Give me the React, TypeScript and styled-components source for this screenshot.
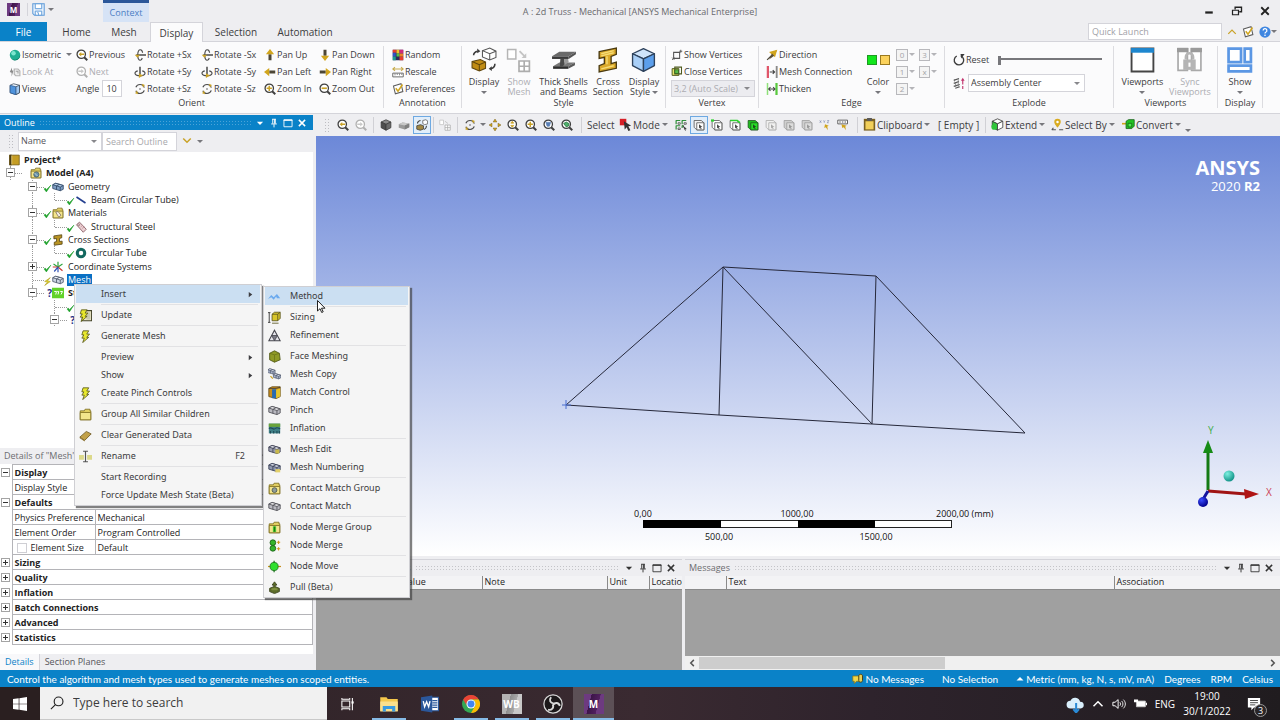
import React, { ReactNode } from 'react';
import styled, { createGlobalStyle, css } from 'styled-components';

const font = {
  ui: '"Open Sans", "Noto Sans", sans-serif',
  menu: '"Noto Sans", "Open Sans", sans-serif',
  status: '"Lato", "Open Sans", sans-serif',
};
const c = {
  blue: '#0a82c8',
  chrome: '#eeeef1',
  ribbon: '#fbfbfc',
  line: '#d4d4da',
  text: '#3c3c40',
  muted: '#adadb2',
};

const Global = createGlobalStyle`
  *, *::before, *::after { box-sizing: border-box; }
  body { margin: 0; background: ${c.chrome}; }
  button, input, select { font: inherit; color: inherit; margin: 0; padding: 0; border: 0; background: none; border-radius: 0; }
  button { display: flex; align-items: center; white-space: nowrap; }
`;

/* ---------- icons ---------- */

const lens = (stroke: string, mark: ReactNode) => (
  <>
    <path d="M10.6 10.6 15 15" stroke={stroke} strokeWidth="2.6" />
    <circle cx="7" cy="7" r="5.6" fill="#fff" stroke={stroke} strokeWidth="1.7" />
    {mark}
  </>
);
const cube = (top: string, left: string, right: string, line = '#3a3a3a') => (
  <g stroke={line} strokeWidth="1" strokeLinejoin="round">
    <path d="M8 1 14.5 4 8 7.2 1.5 4Z" fill={top} />
    <path d="M1.5 4 8 7.2V15L1.5 11.6Z" fill={left} />
    <path d="M14.5 4 8 7.2V15l6.5-3.4Z" fill={right} />
  </g>
);
const brick = (top: string, side: string, line: string) => (
  <g fill={side} stroke={line} strokeWidth="1.1" strokeLinejoin="round">
    <path d="M1 5 5 3l10 3v5l-4 2L1 10Z" />
    <path d="M1 5 5 3l10 3-4 2Z" fill={top} />
    <path d="M11 8v5M6 6.500 6 11.500M6 6.500l4-2" fill="none" />
  </g>
);
const folder = (mark: ReactNode) => (
  <>
    <path d="M1.500 3.500h5l1-2h6v2h1v11h-13z" fill="#e2cf62" stroke="#7a6a1c" />
    <path d="M1.500 5.500h13v9h-13z" fill="#f3e58c" stroke="#7a6a1c" />
    {mark}
  </>
);
const bolt = <path d="M5 1h7L9.500 5H13L9.500 9H12L4.500 15.500 6.500 10H3.500L6 6H3.500Z" fill="#e8e82c" stroke="#55551a" strokeWidth="1" />;
const faceBox = (fill: string, top: string, line: string) => (
  <>
    <path d="M1.500 2h9.500l3.500 3v9.500H5L1.500 11Z" fill={top} stroke={line} />
    <path d="M5 5h9.500v9.500H5Z" fill={fill} stroke={line} />
    <path d="m8 7 4.500 3.500-2 .3 1 2.200-1.200.5-.9-2.200L8 12.500Z" fill={line} />
  </>
);

const glyphs: Record<string, ReactNode> = {
  sphere: <><circle cx="8" cy="8" r="7" fill="#1fae92" /><circle cx="6" cy="5.500" r="3" fill="#7ce6cf" /><path d="M3 13a7 7 0 0 0 12-5 8 8 0 0 1-12 5" fill="#0c7663" /></>,
  lookAt: <><path d="M1 8 4 2v4h2L3.500 14V9Z" fill="#8a8a8a" /><path d="M7 4h5l2.500 2.500V13H9L7 11Z" fill="#eee" stroke="#b4b4b4" strokeWidth="1.600" /><path d="M9 7h3v3" fill="none" stroke="#a4a4a4" strokeWidth="1.400" /></>,
  views: <><path d="M1.500 3 6 1l8 2v10l-5 2.500L1.500 13Z" fill="#eaf3fd" stroke="#3a4654" /><path d="M9 5v10.500l5-2.500V3Z" fill="#9fc6f0" stroke="#3a4654" /><path d="M1.500 3 9 5v10.500L1.500 13Z" fill="#4f93dc" stroke="#2c5a90" /></>,
  magPrev: lens('#3f3f3f', <path d="M3.500 7 7 4v2h4v2H7v2Z" fill="#c9a227" />),
  magNext: lens('#b0b0b0', <path d="M10.500 7 7 4v2H3v2h4v2Z" fill="#c8c8c8" />),
  zoomIn: lens('#3f3f3f', <path d="M7 3.500v7M3.500 7h7" stroke="#c9a227" strokeWidth="2" />),
  zoomOut: lens('#3f3f3f', <path d="M3.500 7h7" stroke="#c9a227" strokeWidth="2.200" />),
  zoomBox: lens('#3f3f3f', <path d="M7 3 9 5.500H5ZM7 11l2-2.500H5Z" fill="#c9a227" stroke="#c9a227" />),
  zoomFit: lens('#3f3f3f', <path d="M4 4.500h6L8.500 9.500h-3Z" fill="#5a7fb5" stroke="#5a7fb5" />),
  zoomSel: lens('#3f3f3f', <path d="m3.500 6 3.500-2 3.500 2v3L7 10.500Z" fill="#4fae6b" stroke="#25743c" />),
  rotX: <><path d="M3 8h13" stroke="#4a4a4a" strokeWidth="2" /><path d="M11.500 5C11 2 9.500 1 8.500 1 6 1 5 5 5 8s1 7 3.500 7c1 0 2-1 2.500-3" fill="none" stroke="#4a4a4a" strokeWidth="1.500" /><path d="M1 7.500h7l-3.500 4Z" fill="#c9a227" /></>,
  rotY: <><path d="M8 1v10" stroke="#4a4a4a" strokeWidth="2" /><path d="M5 6.500C-1 8 .5 13 8 13s9-5 3-6.500" fill="none" stroke="#4a4a4a" strokeWidth="1.500" /><path d="M6.500 16 12 12.500 6.500 9.500Z" fill="#c9a227" /></>,
  rotZ: <><circle cx="8" cy="8" r="6" fill="none" stroke="#4a4a4a" strokeWidth="1.500" strokeDasharray="14 4.850" strokeDashoffset="-2" /><circle cx="8" cy="8" r="1" fill="#4a4a4a" /><path d="m10.500 1 4 1.500-2.500 3.500ZM5.500 15l-4-1.500L4 10Z" fill="#c9a227" /></>,
  up: <><path d="M6 7h4v8H6z" fill="#4c4636" /><path d="M8 0 13.500 7h-11Z" fill="#d1a51d" /></>,
  down: <><path d="M6 1h4v8H6z" fill="#4c4636" /><path d="M8 16 13.500 9h-11Z" fill="#d1a51d" /></>,
  left: <><path d="M7 6h8v4H7z" fill="#4c4636" /><path d="M0 8 7 2.500v11Z" fill="#d1a51d" /></>,
  right: <><path d="M1 6h8v4H1z" fill="#4c4636" /><path d="M16 8 9 2.500v11Z" fill="#d1a51d" /></>,
  random: <><path d="M1 1h14v14H1z" fill="#2d2d60" /><path d="M1 1h5v4H1zM10 10h5v5h-5z" fill="#e63c2e" /><path d="M6 1h4v5H6z" fill="#f0c52b" /><path d="M10 1h5v5h-5z" fill="#d02a7a" /><path d="M1 5h4v5H1z" fill="#3252c5" /><path d="M6 6h4v4H6z" fill="#54c04a" /><path d="M1 10h4v5H1z" fill="#1f9c8d" /><path d="M10 6h5v4h-5z" fill="#ec8126" /></>,
  rescale: <><path d="M1 9.500h14v5H1z" fill="#fff" stroke="#6a6a6a" strokeWidth="1.300" /><path d="M4 10v2.500M7 10v2M10 10v2.500M13 10v2" stroke="#6a6a6a" /><path d="M1 4h14M4 1.500 1 4l3 2.500M12 1.500 15 4l-3 2.500" fill="none" stroke="#c7ab4c" strokeWidth="1.400" /></>,
  prefs: <><path d="m2 4 10-3 2.500 10.500-10 3Z" fill="#fff" stroke="#5c5c5c" strokeWidth="1.400" /><path d="m5 7 3 4 6-9" fill="none" stroke="#d1a51d" strokeWidth="2" /></>,
  vertex: <><path d="M3.500 4.500h8v8h-8z" fill="none" stroke="#555" strokeWidth="1.400" /><path d="M13 1v4M11 3h4M1.500 11.500l3 3M4.500 11.500l-3 3" stroke="#555" strokeWidth="1.200" /></>,
  closeVertex: <><path d="M1.500 3.500h9v9h-9z" fill="#e7e26d" stroke="#4f5a1e" strokeWidth="1.300" /><path d="M5 1.500h9v9H5z" fill="none" stroke="#4f5a1e" strokeWidth="1.400" /><path d="M5 5h5v5H5z" fill="#58b947" stroke="#2f5a1e" /></>,
  direction: <><path d="M1.500 14.500 13.500 2.500" stroke="#4c4636" strokeWidth="1.600" /><path d="m4 4 11-3-3 10Z" fill="#d1a51d" /><path d="m4 14 4-8 3 3Z" fill="#5c513a" /></>,
  meshConn: <><path d="M1 0h3v16H1z" fill="#e0566a" /><path d="M13 0h2.500v16H13z" fill="#8a8a8a" /><path d="M5 8h6M9 5.500 11.500 8 9 10.500" fill="none" stroke="#444" strokeWidth="1.500" /></>,
  thicken: <><path d="M1 0h2v16H1z" fill="#8fe07a" /><path d="M12.500 0h3v16h-3z" fill="#58c93f" /><path d="M4 8h8M6 5.500 3.500 8 6 10.500M9.500 5.500 12 8 9.500 10.500" fill="none" stroke="#444" strokeWidth="1.400" /></>,
  reset: <><path d="M10.500 2.500A6.300 6.300 0 1 1 5 2.700" fill="none" stroke="#3c3c3c" strokeWidth="1.800" /><path d="M10 0h5.500L11 6Z" fill="#3c3c3c" /></>,
  explode: <><path d="M1 4.500 8 2M1 8.500 8 6M1 12.500 9 10M3 15l6-2" stroke="#555" strokeWidth="1.700" /><path d="M2 3v3M7 3v10M3.500 8v5" stroke="#777" /><path d="M13 3v13" stroke="#c2346e" strokeWidth="1.500" strokeDasharray="7 2" /><path d="M10.500 5 13 1l2.500 4Z" fill="#c2346e" /></>,
  dispBig: (
    <>
      <path d="m11 3.500 7-2.500 6 3v6l-6 2.500-7-3Z" fill="#fff" stroke="#555" />
      <path d="m11 3.500 7 3 6-2.500M18 6.500v6" fill="none" stroke="#555" />
      <path d="m1 14 8-2 5 2.500v6L8 23l-7-3Z" fill="#c08c14" stroke="#5f460d" />
      <path d="m1 14 7 3 6-2.500M8 17v6" fill="none" stroke="#5f460d" />
      <path d="M2.500 8c0-2 1-3.500 4-4M23 16c0 3-1 4-4 5" fill="none" stroke="#3c3c3c" strokeWidth="1.500" />
      <path d="M6 1.500 9 4 6 6ZM20 18.500 17 21l3 2Z" fill="#3c3c3c" />
    </>
  ),
  meshBig: (
    <>
      <path d="M1.500 2.500h8v9h-8z" fill="#fff" stroke="#b5b5b5" strokeWidth="1.400" />
      <path d="M12.500 13.500h10v10h-10zM17.500 13.500v10M12.500 18.500h10" fill="#fff" stroke="#adadad" strokeWidth="1.600" />
      <path d="m13 4 5 5" stroke="#c4c4c4" strokeWidth="1.800" /><path d="M19.500 10.500V6l-4.500 4.500Z" fill="#c4c4c4" />
    </>
  ),
  beamBig: (
    <>
      <path d="M1 9 8 4.500h16L17 9Z" fill="#6a6a6a" />
      <path d="M1 9h16v2.500H1Z" fill="#3a3a3a" /><path d="m17 9 7-4.500V7l-7 4.500Z" fill="#555" />
      <path d="m2 18.500 6-3.500h15l-6.500 3.500Z" fill="#777" />
      <path d="M9 11.500h4V17l-2 1.500H8.500Z" fill="#4a4a4a" />
      <path d="M13 11.500h3.500l.500 3-4 3Z" fill="#9a9a9a" />
      <path d="M2 18.500h14.500V21H2Z" fill="#2d2d2d" /><path d="m16.500 18.500 6.500-3.500v2.500L16.500 21Z" fill="#5a5a5a" />
    </>
  ),
  ibeamBig: (
    <>
      <path d="M4 4.500 20.500 1v6l-5 2v7l5-1.500v6L4 24v-6l5-2v-6l-5 1Z" fill="#dba92a" stroke="#4a3a10" strokeWidth="1.300" />
      <path d="m6 6.500 12-3M6 21l12-3M11.500 9v7.500M6 8.500l12-3" stroke="#f6dc75" strokeWidth="1.400" />
    </>
  ),
  cubeBig: (
    <g stroke="#2e425c" strokeWidth="1.300" strokeLinejoin="round">
      <path d="M12 1.500 22.500 6.500 12 11.500 1.500 6.500Z" fill="#cfe4fb" />
      <path d="M1.500 6.500 12 11.500V23.500L1.500 18Z" fill="#a9cff7" />
      <path d="M22.500 6.500 12 11.500V23.500L22.500 18Z" fill="#5c9fec" />
    </g>
  ),
  viewBig: <><path d="M1.500 1.500h21v22h-21z" fill="#fff" stroke="#444" strokeWidth="1.800" /><path d="M1 1h22v4.500H1z" fill="#1e87cf" /></>,
  syncBig: <><path d="M1 1.500h9v21H1zM14 1.500h9v21h-9z" fill="#fff" stroke="#a9a9a9" strokeWidth="1.600" /><path d="M0 1h11v4H0zM13 1h11v4H13z" fill="#9a9a9a" /><path d="M8.500 12V9.500a3.500 3.500 0 0 1 7 0V12" fill="none" stroke="#b5b5b5" strokeWidth="2.400" /><path d="M6 12h12v10H6z" fill="#b5b5b5" /><path d="M11 15h2v4h-2z" fill="#fff" /></>,
  showBig: <><path d="M1.500 1.500h12v13h-12zM17 1.500h6v13h-6zM1.500 18h21.500v5.500h-21.500z" fill="#fff" stroke="#5b97e4" strokeWidth="2.600" /></>,
  cubeDark: cube('#8a8a8a', '#4e4e4e', '#6a6a6a'),
  cubeGrey: <><path d="M1 7 6 4.500 15 6v5l-6 3-8-2.500Z" fill="#9a9a9a" /><path d="m1 7 5-2.500L15 6 9 8.500Z" fill="#c8c8c8" /><path d="M9 8.500 15 6v5l-6 3Z" fill="#808080" /></>,
  dispSmall: <><path d="m9 2 4-1 2.500 1.500v4l-4 1L9 6Z" fill="#fff" stroke="#555" /><path d="m1 9 5-1.500L10 9v4.500L5.500 15 1 13.500Z" fill="#a08642" stroke="#3c3c3c" /><path d="M2 6c0-2 1-3.500 4-4M14 9c0 3-1 4-3 5" fill="none" stroke="#3c3c3c" strokeWidth="1.400" /></>,
  meshSmall: <><path d="M1 1.500h5v6H1z" fill="#fff" stroke="#c0c0c0" /><path d="M8 8h7v7H8zM11.500 8v7M8 11.500h7" fill="#fff" stroke="#aaa" /><path d="m8 3 4 3" stroke="#bbb" /></>,
  pan: <path d="M8 0 10.500 4h-5ZM8 16l2.500-4h-5ZM0 8l4-2.500v5ZM16 8l-4-2.500v5Z" fill="#d1a51d" stroke="#6b5920" strokeWidth=".6" />,
  mode: <><path d="M1 1h8v8H1z" fill="#d61f26" /><path d="m6 4 9 5.500-3.500.7L14 15l-2.500 1-2-4.500L7 14Z" fill="#333" /></>,
  filter: <><path d="M1 2h6M1.500 2v5M9 2h6M9.500 2v5M1 9h6M1.500 9v5M9 9h3M9.500 9v3" fill="none" stroke="#2f8f3a" strokeWidth="1.600" /><path d="M4 5h3v2H4zM12 5h3v2h-3zM4 12h3v2H4z" stroke="#444" fill="#fff" /><path d="m10 9 5 4-2 .2 1 2.300" stroke="#333" fill="#333" /></>,
  fVertex: faceBox('#fff', '#f4f4f4', '#4a4a4a'),
  fPoint: <>{faceBox('#fff', '#fff', '#4a4a4a')}<path d="M0 .500h4v3H0z" fill="#2fd02f" /></>,
  fEdge: <>{faceBox('#fff', '#fff', '#4a4a4a')}<path d="M1.500 2h9.500l3.500 3" fill="none" stroke="#2fd02f" strokeWidth="2.200" /></>,
  fFace: faceBox('#27dd27', '#20bc20', '#1c4f1c'),
  fNode: faceBox('#f0f0f0', '#f0f0f0', '#a8a8a8'),
  fElem: faceBox('#dcdcdc', '#cfcfcf', '#999'),
  xyz: <><path d="m1 2 2 3M3 2 1 5M6 2l1 1.500L8 2M7 3.500V5M11 2h2l-2 3h2" fill="none" stroke="#7a87b0" strokeWidth=".9" /><path d="m8 7 5 2-2 1 1 5-3-4-2 1Z" fill="#d1a51d" /></>,
  tag: <><path d="M1 1.500h13v5H1z" fill="#fff" stroke="#555" strokeWidth="1.200" /><path d="M3 4h2M6.500 4h2M10 4h2" stroke="#555" strokeWidth="1.500" /><path d="m6 7 7 2-2 1 1 5-3-4-2 1Z" fill="#d1a51d" /></>,
  clipboard: <><path d="M1 1h14v14.500H1z" fill="#7a6020" /><path d="M3 4h10v10H3z" fill="#f1cf5a" /><path d="M5 0h6v3.500H5z" fill="#5a5a5a" /></>,
  extend: <>{cube('#fff', '#33c43d', '#fff')}<circle cx="4" cy="11" r="3.500" fill="#2fc53a" /></>,
  selectBy: <><path d="M8 1a4 4 0 0 1 4 4c0 2.500-4 7-4 7S4 7.500 4 5a4 4 0 0 1 4-4Z" fill="#d9ab20" /><circle cx="8" cy="5" r="1.500" fill="#fff" /><path d="M1 14.500h5M10 14.500h5M3 12l-2 2.500" stroke="#555" strokeWidth="1.400" /></>,
  convert: <><path d="M0 7h5" stroke="#d1a51d" strokeWidth="2" /><path d="M5 4 8 2h7v8l-3 3H5Z" fill="#22c322" stroke="#176317" /><path d="M7.500 6.500H12V11H7.500Z" fill="#4cf04c" stroke="#176317" /></>,
  book: <><path d="M2 1.500h13v13H2z" fill="#c59d24" stroke="#6d5510" /><path d="M2 1h3v14H2z" fill="#4a3b12" /><path d="M5 2v12" stroke="#f2dc8c" /></>,
  model: folder(<><circle cx="8.500" cy="10" r="3.500" fill="#6a93a8" stroke="#3a5664" /><path d="m6 8 4 4" stroke="#cde3ef" /></>),
  geometry: brick('#b7cfe8', '#7f9fc4', '#2e4766'),
  mesh: brick('#eef2f8', '#cdd5e2', '#4b566b'),
  brickGrey: brick('#e8e8ea', '#b9b9c0', '#55555c'),
  line: <path d="m2 4 12 8" stroke="#243f8f" strokeWidth="2.200" />,
  material: folder(<path d="m5 7 3-1 4 5-3 2.500Z" fill="#f6f0e4" stroke="#7a6a5a" />),
  steel: <><path d="M2 5 6 1.500 15 11l-4 4Z" fill="#ecd0d4" stroke="#8a6066" strokeWidth="1.200" /><circle cx="5" cy="5" r="1.300" fill="#fff" stroke="#8a6066" /><path d="m7.500 8 3-2.500M9.500 10l3-2.500" stroke="#b98a90" /></>,
  section: <path d="M2.500 2.500 13 1v4l-3 1v4l3.500-.5v4L3 15v-4l3-1V6l-3.500.5Z" fill="#b89324" stroke="#4c3c0d" />,
  ring: <circle cx="8" cy="8" r="5" fill="#fff" stroke="#13685f" strokeWidth="4" />,
  axes: <><path d="m8 8 6-4M8 8 2 4" stroke="#2aa33a" strokeWidth="1.400" /><path d="M8 8V1" stroke="#2aa33a" strokeWidth="1.600" /><path d="m8 8 6 5M8 8H1" stroke="#cc3c33" strokeWidth="1.600" /><path d="m8 8-5 6M8 8v7" stroke="#3454b4" strokeWidth="1.600" /></>,
  solve: <><path d="M0 1h16v14H0z" fill="#62d22a" /><path d="M3 6h3l-1 4M7 6h2l-1 4M11 6h3l-2 4" fill="none" stroke="#fff" strokeWidth="1.300" /></>,
  check: <path d="m2 9 4 5 8-12-8 8-2-3Z" fill="#1fa12b" stroke="#1fa12b" />,
  spark: <path d="M13 1 3 8l5 1-5 6 10-7-5-1Z" fill="#e6d62a" stroke="#a8981a" />,
  bolt,
  update: <><path d="M4 2h11.500v12.500H4z" fill="#eee8c4" stroke="#44442a" strokeWidth="1.300" /><path d="M9 4h5v9H9z" fill="#c9c9b0" /><g transform="translate(-2 0)">{bolt}</g></>,
  folder: folder(null),
  eraser: <><path d="m1 10 8-7 6 3-8 8Z" fill="#c2a14a" stroke="#6f5a22" /><path d="m1 10 6 4v1.500l-6-4Z" fill="#8f7430" /></>,
  rename: <><path d="M0 6h6v6H0zM10 6h6v6h-6z" fill="#dcd98a" /><path d="M5 1.500h2.500L8 2l.5-.5H11M5 14.500h2.500L8 14l.5.5H11M8 2v12" fill="none" stroke="#555" strokeWidth="1.400" /></>,
  method: <path d="m0 11 4-5 3 3 4-4 4 5h-4l-1-2-3 4-3-3Z" fill="#6aa9ee" />,
  sizing: <><path d="M1.500 2v12M0 2h3M0 14h3" stroke="#444" strokeWidth="1.200" fill="none" /><path d="m5 4 3-2.500h7V9l-3 3H5Z" fill="#d8c52a" stroke="#55501a" /><path d="M5 4h7v8M12 4l3-2.500M5 15h8" fill="none" stroke="#55501a" /></>,
  refine: <><path d="M8 1.500 15 14.500H1Z" fill="#e6e6ec" stroke="#44444c" strokeWidth="1.300" /><path d="M4.500 8h7L8 14.500Z" fill="#7b7b86" stroke="#44444c" /></>,
  face: <><path d="m2 4 6-3 6 3 1 8-7 3-6-3Z" fill="#8f9a26" stroke="#4b5212" /><path d="m2 4 6 2 6-2M8 6v9" fill="none" stroke="#6b7418" /></>,
  copy: <><g transform="translate(-1 -1) scale(.65)">{brick('#dfe4ef', '#a9b3c9', '#3d465c')}</g><g transform="translate(6 5) scale(.65)">{brick('#dfe4ef', '#a9b3c9', '#3d465c')}</g><path d="m3 10 3 3" stroke="#c9a227" strokeWidth="1.500" /></>,
  match: <><path d="M1 3 5 1h10v12l-5 2.500L1 13Z" fill="#cb8f1d" stroke="#5d4411" /><path d="M5 4h5v11H5z" fill="#2a6bb0" /><path d="M10 4.500V15l5-2V3Z" fill="#e5c630" /><path d="M1 3h9l5-1.500" fill="none" stroke="#3b3b3b" /></>,
  inflation: <><path d="M1 2h14v12H1z" fill="#3f7f86" /><path d="M1 2h14v4H1z" fill="#6aa33a" /><path d="M1 8c4-3 5 3 8 0s4 1 6 0M3 14v-3M7 14v-3M11 14v-3M14 14v-3" fill="none" stroke="#1f4a55" strokeWidth="1.300" /></>,
  meshEdit: <>{brick('#dfe1e8', '#9b9fae', '#44475a')}<path d="M9 8h5v5H9z" fill="#c9b94a" /></>,
  meshNum: <>{brick('#d6dbe6', '#8f98ae', '#3f465c')}<path d="M9 10h6v4H9z" fill="#e3d06a" /></>,
  contactGroup: folder(<circle cx="8" cy="10" r="3" fill="#8f9c98" stroke="#47534f" />),
  nodeGroup: folder(<><path d="M6 6.500h4v7H6z" fill="#46c22e" /><path d="M8 7v6" stroke="#1b5e12" /></>),
  nodeMerge: <><circle cx="6" cy="4.500" r="3.500" fill="#35b52b" stroke="#165b12" /><circle cx="6" cy="11.500" r="3.500" fill="#35b52b" stroke="#165b12" /><path d="M11 4h4M11 12h4M13 2v4M13 10v4" stroke="#d19a1d" strokeWidth="1.300" /></>,
  nodeMove: <><path d="M0 8h16" stroke="#c98f1d" strokeWidth="1.500" /><path d="M7.500 1v14" stroke="#187018" strokeWidth="1.500" /><circle cx="7.500" cy="8" r="5" fill="#2fe02f" stroke="#187018" /></>,
  pull: <><path d="M8 1 11 5h-2v2l5 2v4l-6 2.500L2 13V9l5-2V5H5Z" fill="#5d6d2a" stroke="#36401a" /><ellipse cx="8" cy="10" rx="4" ry="1.500" fill="#7f9040" /></>,
  pin: <path d="M5 2h6M6 2v7M10 2v7M9 2v7M3.500 9.500h9M8 10v5" fill="none" stroke="currentColor" strokeWidth="1.500" />,
  maxi: <><path d="M1.500 3h13v11h-13z" fill="none" stroke="currentColor" strokeWidth="1.400" /><path d="M1 3.500h14" stroke="currentColor" strokeWidth="2" /></>,
  close: <path d="m3 3 10 10M13 3 3 13" stroke="currentColor" strokeWidth="2.400" />,
  caret: <path d="M3 6h10l-5 5Z" fill="currentColor" />,
  caretUp: <path d="M1 11h14L8 4Z" fill="currentColor" />,
  play: <path d="M4 2v12l8-6Z" fill="currentColor" />,
  chevUp: <path d="m2 11 6-6 6 6" fill="none" stroke="currentColor" strokeWidth="2" />,
  chevDown: <path d="m2 4 6 6 6-6" fill="none" stroke="currentColor" strokeWidth="2.400" />,
  chevLeft: <path d="m11 3-5 5 5 5" fill="none" stroke="currentColor" strokeWidth="2.400" />,
  chevRight: <path d="m5 3 5 5-5 5" fill="none" stroke="currentColor" strokeWidth="2.400" />,
  mini: <path d="M3 10h10" stroke="currentColor" strokeWidth="3" />,
  restore: <><path d="M2 7h8v6H2z" fill="none" stroke="currentColor" strokeWidth="1.600" /><path d="M5.500 6V3H14v6h-3" fill="none" stroke="currentColor" strokeWidth="1.800" /></>,
  save: <><path d="M1 1h14v14H3L1 13Z" fill="#eaf3fd" stroke="#5e9ad8" strokeWidth="1.300" /><path d="M4 1h8v6H4zM4 10h8v5H4z" fill="#fff" stroke="#5e9ad8" strokeWidth="1.200" /><path d="M6 12h2v3" stroke="#5e9ad8" fill="none" /></>,
  help: <><circle cx="8" cy="8" r="7.500" fill="#3f86e0" /><path d="M5.500 6a2.500 2.500 0 1 1 3.500 2.300c-.8.400-1 .7-1 1.700" fill="none" stroke="#fff" strokeWidth="1.700" /><circle cx="8" cy="12.300" r="1.100" fill="#fff" /></>,
  bubble: <><path d="M1 4h9v7H6l-3 3v-3H1Z" fill="#f2d648" stroke="#8a7414" /><path d="M9 4c0-3 5-3 5 0v6c0 3-5 3-5 0Z" fill="#e4cf5a" stroke="#4a3f10" strokeWidth="1.300" /></>,
  win: <path d="m0 2.300 6.500-.9v6.200H0ZM7.300 1.300 16 0v7.600H7.300ZM0 8.400h6.500v6.200L0 13.700ZM7.300 8.400H16V16l-8.700-1.300Z" fill="#fff" />,
  search: <><circle cx="9.800" cy="6.200" r="5" fill="none" stroke="#222" strokeWidth="1.300" /><path d="M6.200 9.800 1 15" stroke="#222" strokeWidth="1.300" /></>,
  taskView: <><path d="M1 4.500h9v7H1z" fill="none" stroke="#fff" strokeWidth="1.200" /><path d="M1 1v1.500h9V1M1 15v-1.500h9V15M13 1v14" fill="none" stroke="#fff" strokeWidth="1.200" /><path d="M12 5h2.500v2.500H12z" fill="#fff" /></>,
  explorer: <><path d="M1 2.500h5l1 1.500h8v9.500H1z" fill="#f5c84c" /><path d="M1 6h14v8H1z" fill="#fbe08c" /><path d="M3 14V9.500h10V14h-2.500v-2h-5v2Z" fill="#3a9be0" /></>,
  word: <><path d="M9 2h6.500v12H9z" fill="#fff" stroke="#2b579a" /><path d="M10 5h4.500M10 7h4.500M10 9h4.500M10 11h4.500" stroke="#2b579a" /><path d="M0 2 10 .500v15L0 14Z" fill="#2b579a" /><path d="m2 5.500 1.200 5L5 6l1.800 4.500L8 5.500" fill="none" stroke="#fff" strokeWidth="1.200" /></>,
  chrome: <><circle cx="8" cy="8" r="8" fill="#34a853" /><path d="M1.070 4A8 8 0 0 1 14.930 4H8a4 4 0 0 0-3.460 6Z" fill="#ea4335" /><path d="M14.930 4A8 8 0 0 1 8 16l3.460-6A4 4 0 0 0 8 4Z" fill="#fbbc05" /><circle cx="8" cy="8" r="4" fill="#fff" /><circle cx="8" cy="8" r="3.100" fill="#4285f4" /></>,
  obs: <><circle cx="8" cy="8" r="7.300" fill="#1c181a" stroke="#d8d8d8" strokeWidth="1" /><path d="M6.500 2.500C4.500 5 6 7.500 8.500 7.500M13.500 9.500C12.500 6.500 9.500 6.500 8 8.800M4 12.500c3 .8 5-1.500 3.800-4.200" fill="none" stroke="#d8d8d8" strokeWidth="1.500" /></>,
  cloud: <><path d="M4 12a3.500 3.500 0 0 1 0-7 4.500 4.500 0 0 1 8.500 1A3 3 0 0 1 13 12Z" fill="#d9effc" /><path d="M9 7v8M6.500 12.500 9 15.500l2.500-3" fill="none" stroke="#2a8ad6" strokeWidth="1.800" /></>,
  sound: <><path d="M1 6h2.500L7 3v10L3.500 10H1Z" fill="none" stroke="#fff" strokeWidth="1.100" /><path d="M9 6c1 1.200 1 2.800 0 4M11 4.500c2 2 2 5 0 7M13 3c3 3 3 7 0 10" fill="none" stroke="#fff" /></>,
  battery: <><path d="M3 5h11v7H3z" fill="#fff" stroke="#ccc" /><path d="M14.500 7h1.500v3h-1.500zM0 3h5v3.500H0z" fill="#fff" /></>,
  note: <><path d="M1 1h14v11H8l-3 3v-3H1Z" fill="#fff" /><path d="M3.500 4h9M3.500 6.500h9M3.500 9h6" stroke="#333" /></>,
};

const Svg = styled.svg<{ $s: number }>`
  display: block;
  flex: none;
  width: ${p => p.$s}px;
  height: ${p => p.$s}px;
`;
const Icon = ({ name, size = 12 }: { name: string; size?: number }) => (
  <Svg $s={size} viewBox={name.endsWith('Big') ? '0 0 25 25' : '0 0 16 16'} aria-hidden="true">{glyphs[name]}</Svg>
);

/* ---------- frame ---------- */

const Page = styled.div`
  position: relative;
  display: flex;
  flex-direction: column;
  min-height: 100vh;
  overflow: hidden;
  font: 9px/12px ${font.ui};
  color: ${c.text};
`;
const TitleBar = styled.header`
  display: grid;
  grid-template-columns: 1fr auto 1fr;
  height: 22px;
  color: #6a6a6e;
`;
const TitleLeft = styled.div`
  display: flex;
  align-items: flex-start;
`;
const AppBadge = styled.span<{ $s: number; $grey?: boolean }>`
  display: flex;
  flex: none;
  align-items: center;
  justify-content: center;
  width: ${p => p.$s}px;
  height: ${p => p.$s}px;
  color: #fff;
  background: ${p => p.$grey
    ? 'linear-gradient(105deg, #b4b4b4 35%, #8e8e8e 36%, #a8a8a8 64%, #c8c8c8 65%)'
    : 'linear-gradient(105deg, #6d3a80 30%, #3c1548 31%, #51205f 66%, #6d3a80 67%)'};
  font: bold ${p => (p.$s > 16 ? 10 : 8)}px/12px ${font.ui};
`;
const QuickTools = styled.div`
  display: flex;
  align-items: center;
  width: 64px;
  gap: 3px;
  padding: 3px 0 0 7px;
`;
const QuickSave = styled.button`
  margin-left: 4px;
  padding-left: 4px;
  border-left: 1px solid ${c.line};
`;
const ContextTab = styled.div`
  width: 46px;
  height: 22px;
  margin-left: 39px;
  padding-top: 4px;
  text-align: center;
  color: #4a7dc4;
  border-top: 3px solid #2b579a;
  background: #d6e3f6;
`;
const TitleText = styled.div`
  padding-top: 6px;
`;
const WindowButtons = styled.div`
  display: flex;
  align-items: flex-start;
  justify-content: flex-end;
  gap: 16px;
  padding: 5px 9px 0 0;
  color: #222;
`;
const TabBar = styled.nav`
  display: flex;
  height: 20px;
  border-bottom: 1px solid ${c.line};
`;
const Tab = styled.button<{ $kind?: 'file' | 'on'; $w: number }>`
  justify-content: center;
  width: ${p => p.$w}px;
  height: 20px;
  font-size: 10px;
  ${p => p.$kind === 'file' && css`color: #fff; background: ${c.blue}; height: 19px; margin-right: 8px;`}
  ${p => p.$kind === 'on' && css`background: ${c.ribbon}; border: 1px solid ${c.line}; border-bottom: 0;`}
`;
const TabTools = styled.div`
  display: flex;
  align-items: center;
  gap: 5px;
  margin-left: auto;
  padding-right: 3px;
  color: #c9a227;
`;
const QuickLaunch = styled.input`
  width: 134px;
  height: 17px;
  padding: 0 3px;
  border: 1px solid ${c.line};
  background: #fff;
  &::placeholder { color: #a2a2a8; opacity: 1; }
`;
const HelpButton = styled.button`
  color: #333;
`;

/* ---------- ribbon ---------- */

const Ribbon = styled.section`
  display: flex;
  height: 72px;
  padding-top: 4px;
  background: ${c.ribbon};
  border-bottom: 1px solid ${c.line};
`;
const Group = styled.div<{ $w: number }>`
  display: flex;
  flex-direction: column;
  flex: none;
  width: ${p => p.$w}px;
  height: 62px;
  border-right: 1px solid #dcdce0;
`;
const GroupBody = styled.div<{ $pl: number }>`
  display: flex;
  flex: none;
  height: 51px;
  padding-left: ${p => p.$pl}px;
`;
const GroupName = styled.div`
  text-align: center;
`;
const Stack = styled.div<{ $w: number }>`
  display: grid;
  flex: none;
  grid-auto-rows: 17px;
  align-content: start;
  width: ${p => p.$w}px;
`;
const Tool = styled.button<{ $off?: boolean }>`
  gap: 1px;
  color: ${p => (p.$off ? c.muted : 'inherit')};
`;
const DropArrow = styled.span<{ $gap?: number; $pale?: boolean }>`
  flex: none;
  width: 0;
  margin-left: ${p => p.$gap ?? 4}px;
  border: 3px solid transparent;
  border-top-color: ${p => (p.$pale ? '#b4b4b8' : '#77777c')};
  border-bottom: 0;
`;
const AngleField = styled.label`
  display: flex;
  align-items: center;
  gap: 3px;
`;
const AngleInput = styled.input`
  width: 20px;
  height: 17px;
  padding-left: 3px;
  border: 1px solid ${c.line};
  background: #fff;
`;
const BigTool = styled.button<{ $w: number; $off?: boolean }>`
  flex: none;
  flex-direction: column;
  width: ${p => p.$w}px;
  height: 51px;
  padding-top: 1px;
  line-height: 10px;
  gap: 4px;
  color: ${p => (p.$off ? c.muted : 'inherit')};
  white-space: pre-line;
`;
const BigLabel = styled.span`
  display: flex;
  flex-direction: column;
  align-items: center;
  gap: 4px;
`;
const InlineLabel = styled.span`
  text-align: center;
`;
const ArrowLine = styled.span`
  display: flex;
  align-items: center;
  justify-content: center;
`;
const SelectBox = styled.span<{ $w: number; $h: number; $off?: boolean }>`
  position: relative;
  display: flex;
  align-items: center;
  width: ${p => p.$w}px;
  height: ${p => p.$h}px;
  background: ${p => (p.$off ? '#ececf0' : '#fff')};
  border: 1px solid ${c.line};
  color: ${p => (p.$off ? c.muted : 'inherit')};
`;
const SelectField = styled.select`
  appearance: none;
  width: 100%;
  height: 100%;
  padding-left: 2px;
  opacity: 1;
`;
const SelectArrow = styled.span`
  position: absolute;
  right: 4px;
  width: 0;
  border: 3px solid transparent;
  border-top-color: #88888c;
  border-bottom: 0;
  pointer-events: none;
`;
const Swatches = styled.span`
  display: flex;
  gap: 3px;
  padding: 8px 0;
`;
const Swatch = styled.span<{ $c: string; $b: string }>`
  width: 10px;
  height: 10px;
  border: 1px solid ${p => p.$b};
  background: ${p => p.$c};
`;
const Counts = styled.div`
  display: grid;
  grid-template-columns: 23px 18px;
  grid-auto-rows: 17px;
  grid-auto-flow: column;
  grid-template-rows: 17px 17px 17px;
`;
const CountBox = styled.span`
  display: flex;
  align-items: center;
  justify-content: center;
  width: 12px;
  height: 12px;
  border: 1px solid #b8b8bc;
  background: #f4f4f4;
  color: #a4a4a8;
  font-size: 8px;
`;
const ExplodeRow = styled.div<{ $h: number }>`
  display: flex;
  align-items: center;
  gap: 3px;
  height: ${p => p.$h}px;
`;
const ExplodeBody = styled.div`
  display: flex;
  flex: none;
  flex-direction: column;
  height: 51px;
  padding: 3px 0 0 8px;
`;
const Slider = styled.input`
  appearance: none;
  width: 104px;
  height: 10px;
  margin-left: 6px;
  background: linear-gradient(#77777b, #77777b) 0 3px / 100% 2px no-repeat;
  &::-webkit-slider-thumb { appearance: none; width: 3px; height: 9px; background: #77777b; }
`;

const tool = (icon: string, label: string, off = false) => (
  <Tool key={label} $off={off} disabled={off}><Icon name={icon} />{label}</Tool>
);

const RibbonBar = () => (
  <Ribbon>
    <Group $w={384}>
      <GroupBody $pl={9}>
        <Stack $w={67}>
          <Tool><Icon name="sphere" />Isometric<DropArrow /></Tool>
          {tool('lookAt', 'Look At', true)}
          {tool('views', 'Views')}
        </Stack>
        <Stack $w={58}>
          {tool('magPrev', 'Previous')}
          {tool('magNext', 'Next', true)}
          <AngleField>Angle<AngleInput defaultValue="10" /></AngleField>
        </Stack>
        <Stack $w={67}>{tool('rotX', 'Rotate +Sx')}{tool('rotY', 'Rotate +Sy')}{tool('rotZ', 'Rotate +Sz')}</Stack>
        <Stack $w={63}>{tool('rotX', 'Rotate -Sx')}{tool('rotY', 'Rotate -Sy')}{tool('rotZ', 'Rotate -Sz')}</Stack>
        <Stack $w={55}>{tool('up', 'Pan Up')}{tool('left', 'Pan Left')}{tool('zoomIn', 'Zoom In')}</Stack>
        <Stack $w={62}>{tool('down', 'Pan Down')}{tool('right', 'Pan Right')}{tool('zoomOut', 'Zoom Out')}</Stack>
      </GroupBody>
      <GroupName>Orient</GroupName>
    </Group>
    <Group $w={78}>
      <GroupBody $pl={8}>
        <Stack $w={66}>{tool('random', 'Random')}{tool('rescale', 'Rescale')}{tool('prefs', 'Preferences')}</Stack>
      </GroupBody>
      <GroupName>Annotation</GroupName>
    </Group>
    <Group $w={204}>
      <GroupBody $pl={5}>
        <BigTool $w={34}><Icon name="dispBig" size={26} /><BigLabel>Display<DropArrow $gap={0} /></BigLabel></BigTool>
        <BigTool $w={36} $off disabled><Icon name="meshBig" size={26} /><InlineLabel>{'Show\nMesh'}</InlineLabel></BigTool>
        <BigTool $w={53}><Icon name="beamBig" size={26} /><InlineLabel>{'Thick Shells\nand Beams'}</InlineLabel></BigTool>
        <BigTool $w={36}><Icon name="ibeamBig" size={26} /><InlineLabel>{'Cross\nSection'}</InlineLabel></BigTool>
        <BigTool $w={36}><Icon name="cubeBig" size={26} /><InlineLabel>Display<ArrowLine>Style<DropArrow $gap={2} /></ArrowLine></InlineLabel></BigTool>
      </GroupBody>
      <GroupName>Style</GroupName>
    </Group>
    <Group $w={93}>
      <GroupBody $pl={5}>
        <Stack $w={84}>
          {tool('vertex', 'Show Vertices')}
          {tool('closeVertex', 'Close Vertices')}
          <SelectBox $w={84} $h={17} $off>
            <SelectField aria-label="Vertex scale" disabled><option>3,2 (Auto Scale)</option></SelectField>
            <SelectArrow />
          </SelectBox>
        </Stack>
      </GroupBody>
      <GroupName>Vertex</GroupName>
    </Group>
    <Group $w={186}>
      <GroupBody $pl={7}>
        <Stack $w={94}>{tool('direction', 'Direction')}{tool('meshConn', 'Mesh Connection')}{tool('thicken', 'Thicken')}</Stack>
        <BigTool $w={36}>
          <Swatches><Swatch $c="#12e61c" $b="#1e9a22" /><Swatch $c="#fbd25c" $b="#9a7a20" /></Swatches>
          <BigLabel>Color<DropArrow $gap={0} /></BigLabel>
        </BigTool>
        <Counts>
          {['0', '1', '2', '3', 'x'].map(n => (
            <Tool key={n} $off disabled><CountBox>{n}</CountBox><DropArrow $gap={0} $pale /></Tool>
          ))}
        </Counts>
      </GroupBody>
      <GroupName>Edge</GroupName>
    </Group>
    <Group $w={169}>
      <ExplodeBody>
        <ExplodeRow $h={22}><Tool><Icon name="reset" />Reset</Tool><Slider type="range" aria-label="Explode factor" defaultValue="0" /></ExplodeRow>
        <ExplodeRow $h={24}>
          <Icon name="explode" />
          <SelectBox $w={117} $h={18}>
            <SelectField aria-label="Explode origin"><option>Assembly Center</option></SelectField>
            <SelectArrow />
          </SelectBox>
        </ExplodeRow>
      </ExplodeBody>
      <GroupName>Explode</GroupName>
    </Group>
    <Group $w={104}>
      <GroupBody $pl={5}>
        <BigTool $w={47}><Icon name="viewBig" size={26} /><BigLabel>Viewports<DropArrow $gap={0} /></BigLabel></BigTool>
        <BigTool $w={48} $off disabled><Icon name="syncBig" size={26} /><InlineLabel>{'Sync\nViewports'}</InlineLabel></BigTool>
      </GroupBody>
      <GroupName>Viewports</GroupName>
    </Group>
    <Group $w={45}>
      <GroupBody $pl={4}>
        <BigTool $w={36}><Icon name="showBig" size={26} /><BigLabel>Show<DropArrow $gap={0} /></BigLabel></BigTool>
      </GroupBody>
      <GroupName>Display</GroupName>
    </Group>
  </Ribbon>
);

/* ---------- left dock ---------- */

const Workspace = styled.main`
  display: flex;
  flex: 1;
  gap: 3px;
  padding-top: 1px;
`;
const LeftDock = styled.aside`
  display: flex;
  flex-direction: column;
  flex: none;
  width: 313px;
`;
const PaneHeader = styled.div<{ $active?: boolean }>`
  display: flex;
  align-items: center;
  gap: 4px;
  height: ${p => (p.$active ? 15 : 16)}px;
  padding: 0 6px 0 4px;
  color: ${p => (p.$active ? '#fff' : '#6c6c70')};
  background: ${p => (p.$active ? c.blue : c.chrome)};
`;
const Dots = styled.span<{ $c: string }>`
  flex: 1;
  height: 6px;
  background: radial-gradient(circle, ${p => p.$c} 35%, transparent 40%) 0 0 / 3px 3px;
`;
const PaneTools = styled.span<{ $c: string }>`
  display: flex;
  gap: 4px;
  color: ${p => p.$c};
`;
const OutlineBar = styled.div`
  display: flex;
  align-items: center;
  height: 22px;
  padding-left: 8px;
  color: #55555a;
  background: ${c.chrome};
`;
const SearchBox = styled.input`
  width: 75px;
  height: 19px;
  margin-right: 5px;
  padding: 0 3px;
  border: 1px solid ${c.line};
  background: #fff;
  &::placeholder { color: #a8a8ac; opacity: 1; }
`;
const OutlineMenu = styled.button`
  gap: 2px;
  color: #c9a227;
`;
const Tree = styled.ul`
  flex: 1;
  margin: 0;
  padding: 1px 0 0;
  list-style: none;
  background: #fff;
  color: #222;
`;
const Row = styled.li`
  display: flex;
  align-items: center;
  height: 13px;
  &:nth-child(3n + 2) { height: 14px; }
`;
const Guide = styled.span<{ $v?: boolean; $half?: boolean; $h?: boolean; $wide?: boolean }>`
  position: relative;
  flex: none;
  width: ${p => (p.$wide ? 23 : 22)}px;
  height: 100%;
  &::before {
    content: '';
    position: absolute;
    left: 10px;
    top: 0;
    height: ${p => (p.$half ? '50%' : '100%')};
    border-left: ${p => (p.$v ? '1px dotted #9a9a9a' : '0')};
  }
  &::after {
    content: '';
    position: absolute;
    left: 11px;
    right: 0;
    top: 50%;
    border-top: ${p => (p.$h ? '1px dotted #9a9a9a' : '0')};
  }
`;
const Expander = styled.button<{ $plus?: boolean }>`
  position: absolute;
  z-index: 1;
  left: 6px;
  top: 2px;
  width: 9px;
  height: 9px;
  border: 1px solid #a4a4a4;
  background:
    linear-gradient(#333, #333) center / 5px 1px no-repeat,
    linear-gradient(#333, #333) center / ${p => (p.$plus ? '1px 5px' : '0 0')} no-repeat,
    #fff;
`;
const Status = styled.span`
  display: flex;
  align-items: flex-end;
  justify-content: flex-end;
  flex: none;
  width: 8px;
  height: 12px;
  font-weight: bold;
  color: #1f2f86;
  font-size: 10px;
`;
const Node = styled.span<{ $bold?: boolean; $on?: boolean }>`
  margin-left: 3px;
  padding: 0 1px;
  white-space: nowrap;
  font-weight: ${p => (p.$bold ? 'bold' : 'normal')};
  color: ${p => (p.$on ? '#fff' : 'inherit')};
  background: ${p => (p.$on ? '#0a70c4' : 'transparent')};
`;

type TreeRow = { g: string; st?: string; icon: string; label: string; bold?: boolean; on?: boolean };
// Guide codes: blank, | line, T tee, L elbow, - open node, + closed node
const tree: TreeRow[] = [
  { g: '-', icon: 'model', label: 'Model (A4)', bold: true },
  { g: ' -', st: 'check', icon: 'geometry', label: 'Geometry' },
  { g: ' |L', st: 'check', icon: 'line', label: 'Beam (Circular Tube)' },
  { g: ' -', st: 'check', icon: 'material', label: 'Materials' },
  { g: ' |L', st: 'check', icon: 'steel', label: 'Structural Steel' },
  { g: ' -', st: 'check', icon: 'section', label: 'Cross Sections' },
  { g: ' |L', st: 'check', icon: 'ring', label: 'Circular Tube' },
  { g: ' +', st: 'check', icon: 'axes', label: 'Coordinate Systems' },
  { g: ' T', st: 'spark', icon: 'mesh', label: 'Mesh', on: true },
  { g: ' -', st: '?', icon: 'solve', label: 'Static Structural (A5)', bold: true },
  { g: '  T', st: 'check', icon: 'folder', label: 'Analysis Settings' },
  { g: '  -', st: '?', icon: 'folder', label: 'Solution (A6)', bold: true },
];

const ProjectRow = styled(Row)`
  padding-left: 8px;
`;

const OutlineTree = () => (
  <Tree>
    <ProjectRow><Icon name="book" /><Node $bold>Project*</Node></ProjectRow>
    {tree.map(r => (
      <Row key={r.label}>
        {r.g.split('').map((k, i) => {
          const box = k === '-' || k === '+';
          return (
            <Guide key={i} $v={k !== ' '} $half={k === 'L'} $h={box || k === 'L' || k === 'T'} $wide={i === 2}>
              {box && <Expander $plus={k === '+'} aria-label={'Toggle ' + r.label} />}
            </Guide>
          );
        })}
        <Status>{r.st && (r.st === '?' ? '?' : <Icon name={r.st} size={9} />)}</Status>
        <Icon name={r.icon} />
        <Node $bold={r.bold} $on={r.on}>{r.label}</Node>
      </Row>
    ))}
  </Tree>
);

const DetailsTable = styled.table`
  width: 100%;
  table-layout: fixed;
  border-collapse: collapse;
  background: #fff;
  color: #222;
`;
const Gutter = styled.td`
  position: relative;
  width: 12px;
  padding: 0;
`;
const GutterToggle = styled(Expander)`
  left: 1px;
  top: 3px;
`;
const Cell = styled.td`
  height: 15px;
  padding: 1px 2px 0;
  border: 1px solid #b4b4b8;
  line-height: 12px;
  white-space: nowrap;
  text-align: left;
  font-weight: normal;
`;
const HeadCell = styled(Cell)`
  font-weight: bold;
`;
const SizeLabel = styled.label`
  display: flex;
  align-items: center;
  gap: 4px;
  padding-left: 2px;
`;
const SizeCheck = styled.input`
  appearance: none;
  width: 10px;
  height: 10px;
  border: 1px solid #cfcfd4;
  background: #fff;
`;
const DetailsFoot = styled.div`
  display: flex;
  padding-top: 9px;
  background: linear-gradient(#fff 9px, ${c.chrome} 9px);
`;
const FootTab = styled.button<{ $on?: boolean }>`
  height: 16px;
  padding: 0 5px;
  color: ${p => (p.$on ? c.blue : '#55555a')};
  background: ${p => (p.$on ? '#f8f8fa' : 'transparent')};
  border-right: 1px solid ${p => (p.$on ? c.line : 'transparent')};
`;

const details: [string, string?][] = [
  ['-Display'], ['Display Style', 'Use Geometry Setting'], ['-Defaults'], ['Physics Preference', 'Mechanical'],
  ['Element Order', 'Program Controlled'], ['Element Size', 'Default'],
  ['+Sizing'], ['+Quality'], ['+Inflation'], ['+Batch Connections'], ['+Advanced'], ['+Statistics'],
];

const HeaderTools = ({ color }: { color: string }) => (
  <PaneTools $c={color}>
    {['caret', 'pin', 'maxi', 'close'].map(n => <button key={n} aria-label={n}><Icon name={n} size={10} /></button>)}
  </PaneTools>
);

const Grip = styled.span`
  width: 5px;
  height: 14px;
  margin-right: 5px;
  background: radial-gradient(circle, #bdbdc2 35%, transparent 40%) 0 0 / 3px 3px;
`;

const Left = () => (
  <LeftDock>
    <PaneHeader $active>Outline<Dots $c="#4ba3d8" /><HeaderTools color="#fff" /></PaneHeader>
    <OutlineBar>
      <Grip />
      <SelectBox $w={84} $h={19}>
        <SelectField aria-label="Outline filter"><option>Name</option></SelectField>
        <SelectArrow />
      </SelectBox>
      <SearchBox aria-label="Search Outline" placeholder="Search Outline" />
      <OutlineMenu aria-label="Outline options"><Icon name="chevDown" size={10} /><DropArrow $gap={3} /></OutlineMenu>
    </OutlineBar>
    <OutlineTree />
    <PaneHeader>Details of "Mesh"<Dots $c="#c4c4c8" /><HeaderTools color="#333" /></PaneHeader>
    <DetailsTable>
      <colgroup><col width="12" /><col width="83" /><col /></colgroup>
      <tbody>
        {details.map(([name, value]) => value ? (
          <tr key={name}>
            <Gutter />
            <Cell>{name === 'Element Size' ? <SizeLabel><SizeCheck type="checkbox" />{name}</SizeLabel> : name}</Cell>
            <Cell>{value}</Cell>
          </tr>
        ) : (
          <tr key={name}>
            <Gutter><GutterToggle $plus={name[0] === '+'} aria-label={'Toggle ' + name.slice(1)} /></Gutter>
            <HeadCell colSpan={2}>{name.slice(1)}</HeadCell>
          </tr>
        ))}
      </tbody>
    </DetailsTable>
    <DetailsFoot><FootTab $on>Details</FootTab><FootTab>Section Planes</FootTab></DetailsFoot>
  </LeftDock>
);

/* ---------- right side ---------- */

const RightArea = styled.section`
  display: flex;
  flex: 1;
  flex-direction: column;
  min-width: 0;
`;
const Toolbar = styled.div`
  display: flex;
  align-items: center;
  height: 21px;
  padding: 0 0 2px 8px;
`;
const BarButton = styled.button<{ $on?: boolean }>`
  flex: none;
  justify-content: center;
  width: 18px;
  height: 18px;
  border: 1px solid ${p => (p.$on ? '#6ea9e2' : 'transparent')};
  background: ${p => (p.$on ? '#e2eefa' : 'transparent')};
`;
const BarText = styled.button<{ $w: number }>`
  flex: none;
  gap: 1px;
  width: ${p => p.$w}px;
  font-size: 10px;
`;
const Rule = styled.span<{ $m?: number }>`
  flex: none;
  width: 1px;
  height: 16px;
  margin: 0 ${p => p.$m ?? 3}px;
  background: #d0d0d5;
`;
const MoreButton = styled.button`
  align-self: flex-end;
  padding: 0 0 2px 4px;
`;
const bar = (names: string[]) => names.map((n, i) => (
  <BarButton key={i} $on={n[0] === '*'} aria-label={n}><Icon name={n.replace('*', '')} /></BarButton>
));

const Viewport = styled.div`
  position: relative;
  flex: 1;
  min-height: 420px;
  background: linear-gradient(#6c88d8, #fff);
`;
const Scene = styled.svg`
  position: absolute;
  inset: 0;
  width: 100%;
  height: 100%;
`;
const Brand = styled.div`
  position: absolute;
  top: 20px;
  right: 20px;
  color: #fff;
  text-align: right;
  font: 13px/14px ${font.ui};
`;
const BrandName = styled.div`
  font: bold 20px/23px ${font.ui};
`;

const Canvas = () => (
  <Viewport>
    <Scene viewBox="0 0 964 420" preserveAspectRatio="xMidYMid meet">
      <defs>
        <radialGradient id="ball" cx=".35" cy=".3" r=".7"><stop offset="0" stopColor="#7df0e0" /><stop offset="1" stopColor="#14958a" /></radialGradient>
        <radialGradient id="zball" cx=".35" cy=".3" r=".7"><stop offset="0" stopColor="#3a4cff" /><stop offset="1" stopColor="#00008c" /></radialGradient>
      </defs>
      <path d="M250 269 407 131 560 140 709 297 556 288 403 279ZM407 131 403 279M407 131 556 288M560 140 556 288" fill="none" stroke="#26283a" strokeWidth="1" />
      <path d="M246 269h9M250 264v9" stroke="#4a6fd0" strokeWidth="1" />
      <rect x="327.500" y="384.500" width="308" height="7" fill="#fff" stroke="#222" />
      <path d="M327 384h78v8h-78zM482 384h77v8h-77z" fill="#000" />
      <g fontFamily={font.ui} fontSize="9" fill="#111">
        <text x="327" y="381" textAnchor="middle">0,00</text>
        <text x="481" y="381" textAnchor="middle">1000,00</text>
        <text x="620" y="381">2000,00 (mm)</text>
        <text x="403" y="404" textAnchor="middle">500,00</text>
        <text x="560" y="404" textAnchor="middle">1500,00</text>
      </g>
      <path d="M892 354v-38" stroke="#147a14" strokeWidth="3" />
      <path d="M892 304 897 317H887Z" fill="#168c16" />
      <path d="m892 355 38 3" stroke="#a01414" strokeWidth="3" />
      <path d="m928 353 15 5-14 5Z" fill="#b01414" />
      <path d="m892 355-6 10" stroke="#1414a0" strokeWidth="3" />
      <circle cx="887" cy="366" r="5" fill="url(#zball)" />
      <circle cx="913" cy="340" r="5.500" fill="url(#ball)" />
      <text x="892" y="298" fontFamily={font.ui} fontSize="10" fill="#3fae4a">Y</text>
      <text x="950" y="360" fontFamily={font.ui} fontSize="10" fill="#cc4455">X</text>
    </Scene>
    <Brand><BrandName>ANSYS</BrandName>2020 <b>R2</b></Brand>
  </Viewport>
);

const BottomDock = styled.div`
  display: flex;
  gap: 3px;
  height: 114px;
  padding-top: 3px;
`;
const BottomPane = styled.section<{ $w?: number }>`
  display: flex;
  flex-direction: column;
  flex: ${p => (p.$w ? `0 0 ${p.$w}px` : '1')};
  min-width: 0;
  border-top: 1px solid ${c.line};
  background: #a0a0a0;
`;
const ListHead = styled.table`
  width: 100%;
  table-layout: fixed;
  border-collapse: collapse;
  background: #f3f3f5;
  color: #222;
`;
const ListCell = styled.th<{ $w?: number }>`
  width: ${p => (p.$w ? p.$w + 'px' : 'auto')};
  height: 13px;
  padding: 0 0 0 2px;
  overflow: hidden;
  white-space: nowrap;
  text-align: left;
  font-weight: normal;
  line-height: 12px;
  border-right: 1px solid #8a8a8a;
  border-bottom: 1px solid #8a8a8a;
  &:last-child { border-right: 0; }
`;
const ScrollBar = styled.div`
  display: flex;
  align-items: center;
  height: 14px;
  margin-top: auto;
  padding: 0 2px;
  color: #555;
  background: #f0f0f0;
`;
const Thumb = styled.span`
  width: 246px;
  height: 12px;
  margin: 0 auto 0 2px;
  background: #cdcdcd;
`;

const Bottom = () => (
  <BottomDock>
    <BottomPane $w={366}>
      <PaneHeader>Graphics Annotations<Dots $c="#c4c4c8" /><HeaderTools color="#333" /></PaneHeader>
      <ListHead>
        <thead><tr><ListCell $w={84}>Type</ListCell><ListCell $w={82}>Value</ListCell><ListCell $w={125}>Note</ListCell><ListCell $w={42}>Unit</ListCell><ListCell>Location</ListCell></tr></thead>
      </ListHead>
    </BottomPane>
    <BottomPane>
      <PaneHeader>Messages<Dots $c="#c4c4c8" /><HeaderTools color="#333" /></PaneHeader>
      <ListHead>
        <thead><tr><ListCell $w={41} aria-label="Severity" /><ListCell>Text</ListCell><ListCell $w={166}>Association</ListCell></tr></thead>
      </ListHead>
      <ScrollBar><button aria-label="Scroll left"><Icon name="chevLeft" size={10} /></button><Thumb /><button aria-label="Scroll right"><Icon name="chevRight" size={10} /></button></ScrollBar>
    </BottomPane>
  </BottomDock>
);

const Right = () => (
  <RightArea>
    <Toolbar>
      <Grip />
      {bar(['magPrev', 'magNext'])}<Rule />
      {bar(['cubeDark', 'cubeGrey', '*dispSmall'])}<Rule $m={2} />{bar(['meshSmall'])}<Rule />
      {bar(['rotZ'])}<DropArrow $gap={1} />{bar(['pan', 'zoomBox', 'zoomIn', 'zoomFit', 'zoomSel'])}<Rule $m={5} />
      <BarText $w={32}>Select</BarText>
      <BarText $w={53}><Icon name="mode" size={13} />Mode<DropArrow $gap={1} /></BarText>
      {bar(['filter', '*fVertex', 'fPoint', 'fEdge', 'fFace', 'fNode', 'fElem', 'fElem', 'xyz', 'tag'])}<Rule $m={5} />
      <BarText $w={75}><Icon name="clipboard" size={13} />Clipboard<DropArrow $gap={1} /></BarText>
      <BarText $w={42}>[ Empty ]</BarText><Rule $m={5} />
      <BarText $w={60}><Icon name="extend" size={13} />Extend<DropArrow $gap={1} /></BarText>
      <BarText $w={71}><Icon name="selectBy" size={13} />Select By<DropArrow $gap={1} /></BarText>
      <BarText $w={59}><Icon name="convert" size={13} />Convert<DropArrow $gap={1} /></BarText>
      <MoreButton aria-label="More tools"><DropArrow $gap={0} /></MoreButton>
    </Toolbar>
    <Canvas />
    <Bottom />
  </RightArea>
);

/* ---------- menus ---------- */

const Menu = styled.div<{ $x: number; $y: number; $w: number }>`
  position: absolute;
  left: ${p => p.$x}px;
  top: ${p => p.$y}px;
  width: ${p => p.$w}px;
  padding: 0 1px 1px;
  border: 1px solid #cfcfd3;
  background: #f5f5f5;
  box-shadow: 2px 2px 1px rgba(60, 60, 60, 0.65);
  font: 9px/12px ${font.menu};
`;
const MenuItem = styled.button<{ $on?: boolean }>`
  width: 100%;
  height: 18px;
  padding: 0 6px 0 3px;
  background: ${p => (p.$on ? '#cbdff2' : 'transparent')};
  color: #3c3c40;
`;
const MenuIcon = styled.span`
  width: 22px;
`;
const MenuLabel = styled.span`
  flex: 1;
  text-align: left;
`;
const MenuKey = styled.span`
  margin-right: 9px;
`;
const MenuRule = styled.hr`
  height: 1px;
  margin: 1px 2px 1px 25px;
  border: 0;
  background: #e2e2e4;
`;
const Pointer = styled.svg`
  position: absolute;
  left: 317px;
  top: 300px;
  width: 9px;
  height: 13px;
`;

type Item = [icon: string, label: string, extra?: string] | null;
const mainMenu: Item[] = [
  ['', 'Insert', '>'], null, ['update', 'Update'], null, ['bolt', 'Generate Mesh'], null,
  ['', 'Preview', '>'], ['', 'Show', '>'], ['bolt', 'Create Pinch Controls'], null,
  ['folder', 'Group All Similar Children'], null, ['eraser', 'Clear Generated Data'], null,
  ['rename', 'Rename', 'F2'], null, ['', 'Start Recording'], ['', 'Force Update Mesh State (Beta)'],
];
const insertMenu: Item[] = [
  ['method', 'Method'], null, ['sizing', 'Sizing'], ['refine', 'Refinement'], null,
  ['face', 'Face Meshing'], ['copy', 'Mesh Copy'], ['match', 'Match Control'], ['brickGrey', 'Pinch'], ['inflation', 'Inflation'], null,
  ['meshEdit', 'Mesh Edit'], ['meshNum', 'Mesh Numbering'], null,
  ['contactGroup', 'Contact Match Group'], ['brickGrey', 'Contact Match'], null,
  ['nodeGroup', 'Node Merge Group'], ['nodeMerge', 'Node Merge'], null, ['nodeMove', 'Node Move'], null, ['pull', 'Pull (Beta)'],
];
const menuItems = (items: Item[]) => items.map((it, i) => it ? (
  <MenuItem key={i} $on={i === 0} role="menuitem">
    <MenuIcon>{it[0] && <Icon name={it[0]} size={13} />}</MenuIcon>
    <MenuLabel>{it[1]}</MenuLabel>
    {it[2] === '>' ? <Icon name="play" size={7} /> : it[2] && <MenuKey>{it[2]}</MenuKey>}
  </MenuItem>
) : <MenuRule key={i} />);

/* ---------- status bar and taskbar ---------- */

const StatusBar = styled.footer`
  display: flex;
  align-items: center;
  gap: 10px;
  height: 17px;
  padding: 0 7px;
  color: #fff;
  background: ${c.blue};
  font: 10px/12px ${font.status};
`;
const Hint = styled.span`
  margin-right: auto;
`;
const StatusItem = styled.span<{ $wide?: boolean }>`
  display: flex;
  align-items: center;
  gap: 2px;
  margin-right: ${p => (p.$wide ? 8 : 0)}px;
`;
const Taskbar = styled.div`
  display: flex;
  height: 33px;
  color: #fff;
  background: linear-gradient(90deg, #2c2124, #3a2a31 50%, #2e232c 68%, #201c1f);
`;
const Start = styled.button`
  justify-content: center;
  width: 40px;
  background: #2a1f20;
`;
const TaskSearch = styled.label`
  display: flex;
  align-items: center;
  gap: 9px;
  width: 287px;
  padding-left: 10px;
  background: #f1f1f1;
  border-bottom: 1px solid #c9c9c9;
`;
const TaskInput = styled.input`
  flex: 1;
  font: 12px/16px ${font.ui};
  &::placeholder { color: #3c3c3c; opacity: 1; }
`;
const TaskApps = styled.div`
  display: flex;
`;
const TaskApp = styled.button<{ $run?: boolean; $on?: boolean }>`
  justify-content: center;
  width: 41px;
  background: ${p => (p.$on
    ? 'linear-gradient(#86bbe6, #86bbe6) 0 100% / 100% 2px no-repeat, #5c5056'
    : p.$run ? 'linear-gradient(#86bbe6, #86bbe6) 50% 100% / 34px 2px no-repeat' : 'none')};
`;
const Tray = styled.div`
  display: flex;
  align-items: center;
  gap: 8px;
  margin-left: auto;
  padding-right: 19px;
  font-size: 10px;
`;
const Clock = styled.div`
  width: 48px;
  line-height: 15px;
  text-align: center;
`;
const Notes = styled.button`
  position: relative;
  margin-left: 8px;
`;
const NoteCount = styled.span`
  position: absolute;
  right: -6px;
  bottom: -6px;
  width: 13px;
  height: 13px;
  border: 1px solid #999;
  border-radius: 50%;
  background: #2a2628;
  font: 9px/11px ${font.ui};
`;

export default function App() {
  return (
    <Page>
      <Global />
      <TitleBar>
        <TitleLeft>
          <QuickTools>
            <AppBadge $s={13}>M</AppBadge>
            <QuickSave aria-label="Save"><Icon name="save" size={13} /></QuickSave>
            <DropArrow $gap={0} />
          </QuickTools>
          <ContextTab>Context</ContextTab>
        </TitleLeft>
        <TitleText>A : 2d Truss - Mechanical [ANSYS Mechanical Enterprise]</TitleText>
        <WindowButtons>
          <button aria-label="Minimize"><Icon name="mini" /></button>
          <button aria-label="Restore"><Icon name="restore" /></button>
          <button aria-label="Close"><Icon name="close" /></button>
        </WindowButtons>
      </TitleBar>
      <TabBar>
        <Tab $kind="file" $w={47}>File</Tab>
        <Tab $w={43}>Home</Tab>
        <Tab $w={52}>Mesh</Tab>
        <Tab $kind="on" $w={53}>Display</Tab>
        <Tab $w={66}>Selection</Tab>
        <Tab $w={72}>Automation</Tab>
        <TabTools>
          <QuickLaunch aria-label="Quick Launch" placeholder="Quick Launch" />
          <Icon name="chevUp" size={10} />
          <Icon name="prefs" />
          <HelpButton aria-label="Help"><Icon name="help" /><DropArrow $gap={0} /></HelpButton>
        </TabTools>
      </TabBar>
      <RibbonBar />
      <Workspace><Left /><Right /></Workspace>
      <StatusBar>
        <Hint>Control the algorithm and mesh types used to generate meshes on scoped entities.</Hint>
        <StatusItem $wide><Icon name="bubble" />No Messages</StatusItem>
        <StatusItem $wide>No Selection</StatusItem>
        <StatusItem><Icon name="caretUp" size={8} />Metric (mm, kg, N, s, mV, mA)</StatusItem>
        <StatusItem>Degrees</StatusItem>
        <StatusItem>RPM</StatusItem>
        <StatusItem>Celsius</StatusItem>
      </StatusBar>
      <Taskbar>
        <Start aria-label="Start"><Icon name="win" size={14} /></Start>
        <TaskSearch><Icon name="search" size={14} /><TaskInput aria-label="Search" placeholder="Type here to search" /></TaskSearch>
        <TaskApps>
          <TaskApp aria-label="Task View"><Icon name="taskView" size={14} /></TaskApp>
          <TaskApp aria-label="File Explorer" $run><Icon name="explorer" size={20} /></TaskApp>
          <TaskApp aria-label="Word"><Icon name="word" size={18} /></TaskApp>
          <TaskApp aria-label="Chrome" $run><Icon name="chrome" size={18} /></TaskApp>
          <TaskApp aria-label="Workbench" $run><AppBadge $s={20} $grey>WB</AppBadge></TaskApp>
          <TaskApp aria-label="OBS" $run><Icon name="obs" size={20} /></TaskApp>
          <TaskApp aria-label="Mechanical" $run $on><AppBadge $s={20}>M</AppBadge></TaskApp>
        </TaskApps>
        <Tray>
          <Icon name="cloud" size={18} />
          <Icon name="chevUp" />
          <Icon name="sound" size={14} />
          <Icon name="battery" size={13} />
          ENG
          <Clock>19:00<br />30/1/2022</Clock>
          <Notes aria-label="Notifications"><Icon name="note" size={14} /><NoteCount>3</NoteCount></Notes>
        </Tray>
      </Taskbar>
      <Menu $x={74} $y={284} $w={188} role="menu">{menuItems(mainMenu)}</Menu>
      <Menu $x={263} $y={286} $w={147} role="menu">{menuItems(insertMenu)}</Menu>
      <Pointer viewBox="0 0 9 13"><path d="M.5.5v10.500l2.500-2.300 1.700 3.800 1.500-.7-1.700-3.600H8Z" fill="#fff" stroke="#222" /></Pointer>
    </Page>
  );
}
